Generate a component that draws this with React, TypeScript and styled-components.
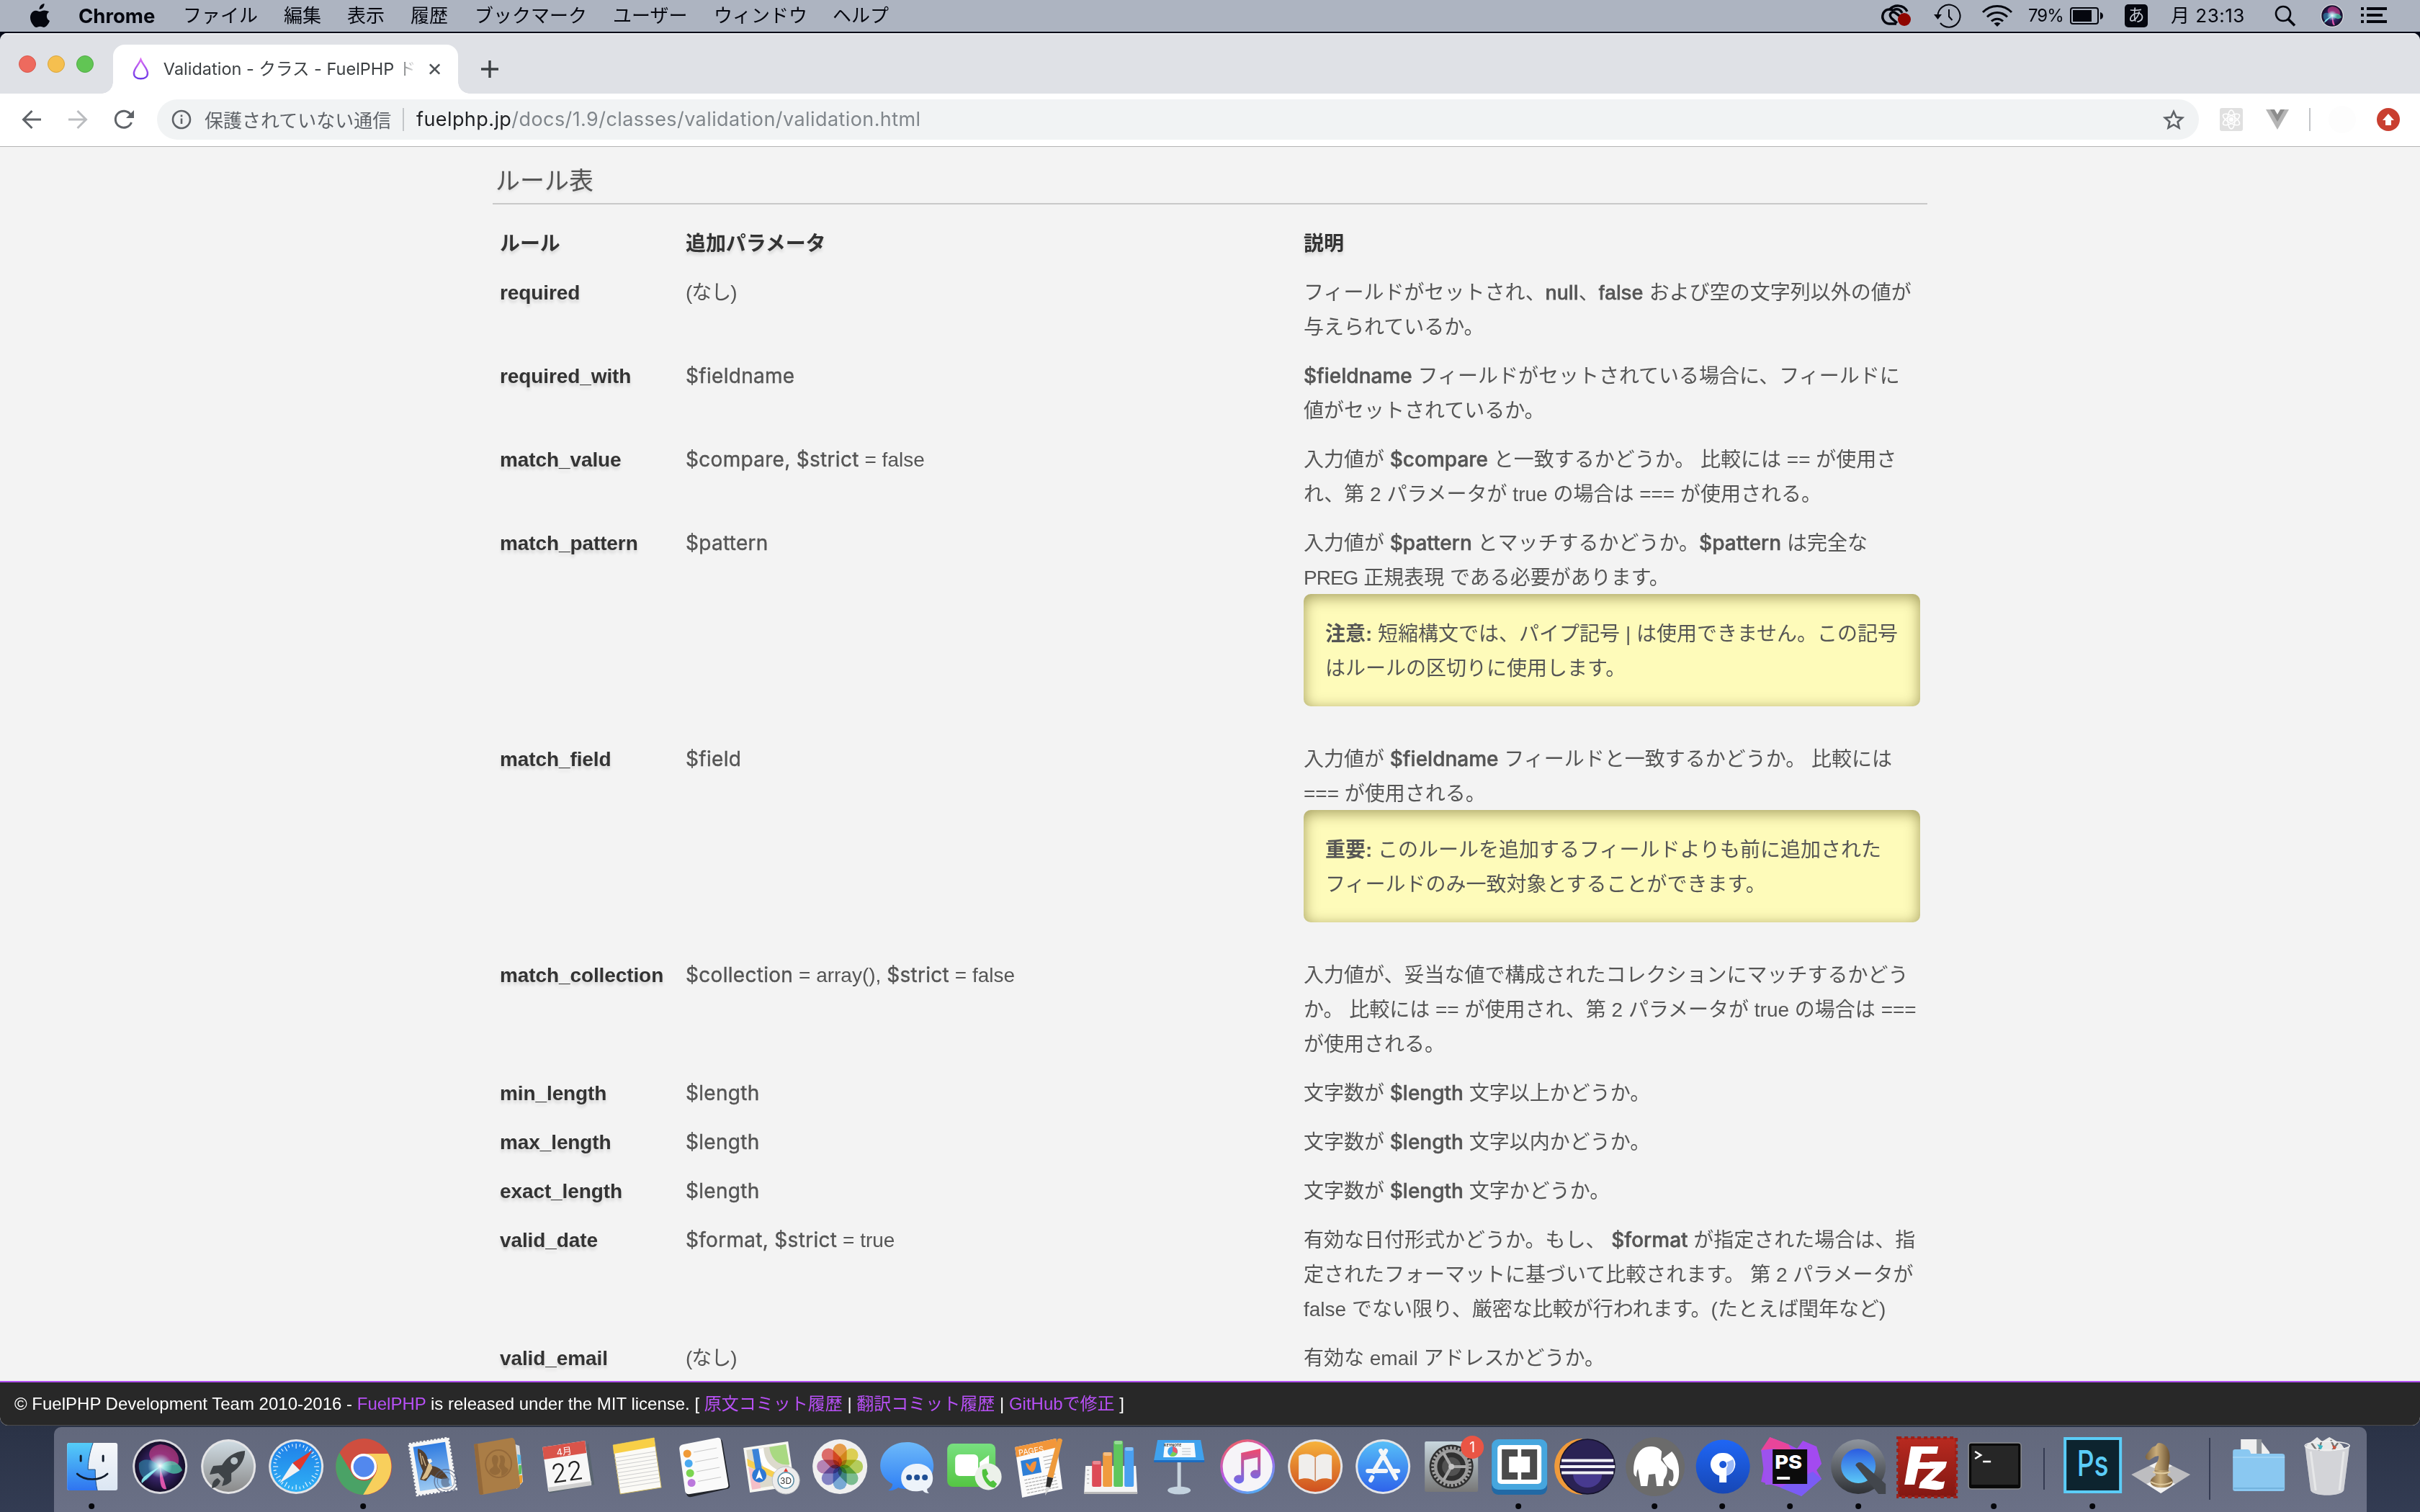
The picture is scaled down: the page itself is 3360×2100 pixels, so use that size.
import React from 'react';
import styled, { createGlobalStyle } from 'styled-components';

const ui = `Inter, "Noto Sans CJK JP", sans-serif`;
const bodyFont = `"Liberation Sans", "Noto Sans CJK JP", sans-serif`;

const GlobalStyle = createGlobalStyle`
  html, body { margin: 0; padding: 0; overflow: hidden; }
  *, *::before, *::after { box-sizing: border-box; }
  body { text-spacing-trim: space-all; }
`;

const Desktop = styled.div`
  width: 3360px;
  height: 2100px;
  display: flex;
  flex-direction: column;
  overflow: hidden;
  background: linear-gradient(180deg, #050a18 0, #050a18 60px, #232a3a 1900px, #2b3347 1990px, #333c53 2100px);
  font-family: ${ui};
`;

/* ---------- menu bar ---------- */
const MenuBar = styled.header`
  flex: none;
  height: 44px;
  margin-bottom: 2px;
  display: flex;
  align-items: center;
  background: #adb4c1;
  color: #05070f;
  font-size: 26px;
  line-height: 44px;
  white-space: nowrap;
`;
const AppleSlot = styled.span`
  display: flex;
  width: 109px;
  padding-left: 41px;
`;
const AppName = styled.span`
  width: 145px;
  font-weight: 700;
  font-size: 27.5px;
`;
const MenuItem = styled.span<{ $w: number }>`
  width: ${p => p.$w}px;
`;
const Status = styled.div`
  margin-left: auto;
  width: 748px;
  display: flex;
  align-items: center;
`;
const StatusSlot = styled.span<{ $w: number }>`
  width: ${p => p.$w}px;
  height: 44px;
  display: flex;
  align-items: center;
  svg { overflow: visible; }
`;
const StatusText = styled(StatusSlot)<{ $size: number; $track?: number }>`
  font-size: ${p => p.$size}px;
  letter-spacing: ${p => p.$track ?? 0}px;
`;
const InputMode = styled.span`
  width: 32px;
  height: 32px;
  border-radius: 5px;
  background: #05070f;
  color: #c3c8d2;
  font-size: 23px;
  line-height: 30px;
  text-align: center;
`;

/* ---------- browser window ---------- */
const Window = styled.main`
  flex: none;
  height: 1934px;
  margin-bottom: 2px;
  display: flex;
  flex-direction: column;
  border-radius: 10px 10px 12px 12px;
  overflow: hidden;
  background: #f3f3f3;
`;
const TabStrip = styled.div`
  flex: none;
  height: 84px;
  display: flex;
  background: #dfe1e6;
  border-top: 2px solid #eceef1;
`;
const Lights = styled.div`
  width: 157px;
  padding: 29px 0 0 26px;
  display: flex;
  gap: 16px;
`;
const Light = styled.i<{ $c: string; $b: string }>`
  width: 24px;
  height: 24px;
  border-radius: 50%;
  background: ${p => p.$c};
  border: 1px solid ${p => p.$b};
`;
const Tab = styled.div`
  position: relative;
  width: 479px;
  height: 68px;
  margin-top: 14px;
  padding: 0 24px 0 27px;
  display: flex;
  align-items: center;
  background: #fff;
  border-radius: 16px 16px 0 0;
  &::before, &::after {
    content: '';
    position: absolute;
    bottom: 0;
    width: 16px;
    height: 16px;
  }
  &::before { left: -16px; background: radial-gradient(circle at 0 0, transparent 15.5px, #fff 16px); }
  &::after { right: -16px; background: radial-gradient(circle at 100% 0, transparent 15.5px, #fff 16px); }
`;
const TabTitle = styled.span`
  width: 350px;
  margin: 0 18px 0 20px;
  white-space: nowrap;
  font-size: 23.5px;
  color: #3c4043;
  line-height: 40px;
  mask-image: linear-gradient(90deg, #000 322px, transparent 352px);
`;
const NewTab = styled.div`
  padding: 36px 0 0 32px;
`;
const Toolbar = styled.div`
  flex: none;
  height: 74px;
  display: flex;
  align-items: center;
  padding-bottom: 2px;
  background: #fff;
  border-bottom: 1px solid #b5b5b5;
`;
const NavButtons = styled.div`
  width: 218px;
  padding-left: 28px;
  display: flex;
  gap: 32px;
`;
const Omnibox = styled.div`
  width: 2835px;
  height: 56px;
  padding: 0 20px 0 20px;
  border-radius: 28px;
  background: #f1f3f4;
  display: flex;
  align-items: center;
  font-size: 26px;
  color: #5f6368;
  white-space: nowrap;
`;
const Security = styled.span`
  width: 261px;
  margin-left: 18px;
`;
const Rule = styled.i<{ $m: string }>`
  width: 2px;
  height: 32px;
  margin: ${p => p.$m};
  background: #c3c6c9;
`;
const Url = styled.span`
  flex: 1;
  color: #80868b;
  font-size: 27px;
  letter-spacing: 0.42px;
  b { font-weight: 400; color: #202124; }
`;
const Extensions = styled.div`
  flex: 1;
  display: flex;
  align-items: center;
  padding-left: 29px;
`;
const Ghost = styled.i`
  width: 38px;
  height: 38px;
  margin-right: 29px;
  border-radius: 50%;
  background: #fdfdfd;
`;

/* ---------- document ---------- */
const Page = styled.section`
  flex: 1;
  min-height: 0;
  overflow: hidden;
  padding-left: 684px;
  font-family: ${bodyFont};
  color: #555;
`;
const Heading = styled.h3`
  width: 1992px;
  height: 80px;
  margin: 0 0 19px;
  padding: 14px 0 0 4px;
  border-bottom: 2px solid #c9c9c9;
  font-weight: 400;
  font-size: 34px;
  line-height: 66px;
  text-shadow: 0 2px 4px rgba(0, 0, 0, 0.12);
`;
const Table = styled.div`
  width: 1992px;
  font-size: 28px;
  line-height: 51px;
`;
const Row = styled.div`
  display: grid;
  grid-template-columns: 258px 858px 876px;
`;
const Cell = styled.div`
  padding: 10px;
  white-space: nowrap;
`;
const HeadCell = styled(Cell)`
  padding-bottom: 7px;
  font-weight: 700;
  color: #333;
  letter-spacing: -0.1px;
  text-shadow: 0 4px 4px rgba(0, 0, 0, 0.12);
`;
const Line = styled.div`
  height: 48px;
`;
const Var = styled.span<{ $strong?: boolean }>`
  font-family: ${ui};
  font-weight: ${p => (p.$strong ? 500 : 400)};
  line-height: 0;
  letter-spacing: ${p => (p.$strong ? 0 : 0.3)}px;
  -webkit-text-stroke: ${p => (p.$strong ? 0.5 : 0.4)}px #555;
`;
const Med = styled.span`
  letter-spacing: 0.6px;
  -webkit-text-stroke: 0.9px #555;
`;
const Tight = styled.span`
  letter-spacing: -1px;
`;
const Note = styled.div`
  height: 156px;
  margin-bottom: 28px;
  padding: 30px;
  border-radius: 10px;
  background: #fefbba;
  box-shadow: inset 0 4px 20px rgba(70, 60, 0, 0.5);
`;
const PageFooter = styled.footer`
  flex: none;
  height: 62px;
  padding: 1px 0 0 20px;
  border-top: 2px solid #b14ff0;
  background: #282828;
  border-radius: 0 0 12px 12px;
  box-shadow: inset 0 -1px 0 #4a4a4a;
  color: #fff;
  font: 24px/58px ${bodyFont};
  white-space: nowrap;
`;
const Link = styled.a`
  color: #b750f5;
`;

/* ---------- dock ---------- */
const DockBar = styled.nav`
  width: 3211px;
  height: 118px;
  margin-left: 75px;
  padding: 0 7px 0 6px;
  display: flex;
  border-radius: 10px 10px 0 0;
  background: linear-gradient(180deg, #62687c, #6a7086);
`;
const DockItem = styled.div`
  flex: none;
  width: 94.33px;
  height: 118px;
  svg { display: block; width: 94.33px; height: 118px; overflow: visible; }
`;
const DockDivider = styled.div<{ $h: number }>`
  width: 42px;
  display: flex;
  justify-content: center;
  &::after {
    content: '';
    width: 2px;
    height: ${p => p.$h}px;
    margin-top: ${p => (118 - p.$h) / 2 - 1}px;
    background: #353b52;
  }
`;

const V = ({ children }: { children: string }) => <Var>{children}</Var>;
const S = ({ children }: { children: string }) => <Var $strong>{children}</Var>;

type RuleRow = { name: string; params: React.ReactNode; lines: React.ReactNode[]; note?: React.ReactNode[] };

const rules: RuleRow[] = [
  {
    name: 'required',
    params: <Tight>(なし)</Tight>,
    lines: [<>フィールドがセットされ、<Med>null</Med>、<Med>false</Med> および空の文字列以外の値が</>, '与えられているか。'],
  },
  {
    name: 'required_with',
    params: <V>$fieldname</V>,
    lines: [<><S>$fieldname</S> フィールドがセットされている場合に、フィールドに</>, '値がセットされているか。'],
  },
  {
    name: 'match_value',
    params: <><V>$compare, $strict</V> = false</>,
    lines: [<>入力値が <S>$compare</S> と一致するかどうか。 比較には == が使用さ</>, 'れ、第 2 パラメータが true の場合は === が使用される。'],
  },
  {
    name: 'match_pattern',
    params: <V>$pattern</V>,
    lines: [<>入力値が <S>$pattern</S> とマッチするかどうか。<S>$pattern</S> は完全な</>, <><Tight>PREG</Tight> 正規表現 である必要があります。</>],
    note: [<><b>注意:</b> 短縮構文では、パイプ記号 | は使用できません。この記号</>, 'はルールの区切りに使用します。'],
  },
  {
    name: 'match_field',
    params: <V>$field</V>,
    lines: [<>入力値が <S>$fieldname</S> フィールドと一致するかどうか。 比較には</>, '=== が使用される。'],
    note: [<><b>重要:</b> このルールを追加するフィールドよりも前に追加された</>, 'フィールドのみ一致対象とすることができます。'],
  },
  {
    name: 'match_collection',
    params: <><V>$collection</V> = array(), <V>$strict</V> = false</>,
    lines: [
      '入力値が、妥当な値で構成されたコレクションにマッチするかどう',
      'か。 比較には == が使用され、第 2 パラメータが true の場合は ===',
      'が使用される。',
    ],
  },
  { name: 'min_length', params: <V>$length</V>, lines: [<>文字数が <S>$length</S> 文字以上かどうか。</>] },
  { name: 'max_length', params: <V>$length</V>, lines: [<>文字数が <S>$length</S> 文字以内かどうか。</>] },
  { name: 'exact_length', params: <V>$length</V>, lines: [<>文字数が <S>$length</S> 文字かどうか。</>] },
  {
    name: 'valid_date',
    params: <><V>$format, $strict</V> = true</>,
    lines: [
      <>有効な日付形式かどうか。もし、 <S>$format</S> が指定された場合は、指</>,
      '定されたフォーマットに基づいて比較されます。 第 2 パラメータが',
      'false でない限り、厳密な比較が行われます。(たとえば閏年など)',
    ],
  },
  { name: 'valid_email', params: <Tight>(なし)</Tight>, lines: ['有効な email アドレスかどうか。'] },
];

const menus: [string, number][] = [
  ['ファイル', 140], ['編集', 88], ['表示', 88], ['履歴', 89], ['ブックマーク', 192], ['ユーザー', 140], ['ウィンドウ', 165], ['ヘルプ', 100],
];

/* ---------- dock artwork ---------- */
const Grad = ({ id, a, b }: { id: string; a: string; b: string }) => (
  <linearGradient id={id} x1="0" y1="0" x2="0" y2="1">
    <stop offset="0" stopColor={a} />
    <stop offset="1" stopColor={b} />
  </linearGradient>
);
const range = (n: number) => Array.from({ length: n }, (_, i) => i);
const Ring = ({ id, a, b }: { id: string; a: string; b: string }) => (
  <>
    <defs><Grad id={id} a={a} b={b} /></defs>
    <circle cx="47" cy="55" r="38" fill="#e4e4e6" />
    <circle cx="47" cy="55" r="35" fill={`url(#${id})`} />
  </>
);

const art: Record<string, React.ReactNode> = {
  finder: (
    <>
      <defs><Grad id="fi" a="#55cdf8" b="#2f74f0" /><Grad id="fj" a="#f7f8fa" b="#dbe6f3" /></defs>
      <rect x="12" y="22" width="70" height="66" rx="3" fill="url(#fj)" />
      <path d="M15 22H48C43 36 41 48 41 59H51C51 70 52 80 54 88H15a3 3 0 0 1-3-3V25a3 3 0 0 1 3-3Z" fill="url(#fi)" />
      <path d="M48 22C43 36 41 48 41 59H51C51 70 52 80 54 88" fill="none" stroke="#1d4f86" strokeWidth="1" />
      <path d="M31 40v7M62 40v7" stroke="#101c2c" strokeWidth="3" strokeLinecap="round" />
      <path d="M26 65C36 75 58 75 68 65" fill="none" stroke="#101c2c" strokeWidth="2.6" strokeLinecap="round" />
    </>
  ),
  siri: (
    <>
      <defs>
        <radialGradient id="si" cx=".5" cy=".5" r=".55"><stop offset="0" stopColor="#5a3b9e" /><stop offset=".6" stopColor="#2b1c52" /><stop offset="1" stopColor="#0d0a1c" /></radialGradient>
        <radialGradient id="sg"><stop offset="0" stopColor="#fff" /><stop offset=".4" stopColor="#bff" stopOpacity=".7" /><stop offset="1" stopColor="#bff" stopOpacity="0" /></radialGradient>
      </defs>
      <circle cx="47" cy="55" r="38" fill="#d9d9de" />
      <circle cx="47" cy="55" r="35" fill="url(#si)" />
      <path d="M47 55C24 45 30 26 48 24c20 2 28 16 24 28Z" fill="#d8418f" opacity=".6" />
      <path d="M47 55C38 44 24 42 18 50c-2 12 4 20 10 24Z" fill="#2f8fb0" opacity=".6" />
      <path d="M47 55C60 40 74 50 78 60c-8 8-18 6-31-5Z" fill="#4fd6ae" opacity=".7" />
      <path d="M47 55l9 31c-8 2-10-8-9-31Z" fill="#f05bb6" opacity=".9" />
      <path d="M47 55L22 78c-4-6 8-14 25-23Z" fill="#8ef1f5" opacity=".9" />
      <circle cx="47" cy="54" r="17" fill="url(#sg)" />
    </>
  ),
  launchpad: (
    <>
      <Ring id="lp" a="#cfdbe2" b="#8a8a8a" />
      <path d="M70 33C54 34 44 43 38 53l-12 1c-3 5-4 9-5 12l12-2 8 8-3 10c5-1 9-3 13-7l0-11C62 57 70 46 70 33Z" fill="#3e4347" />
      <circle cx="55" cy="47" r="5" fill="#b8c2c7" />
      <path d="M24 85c0-8 3-12 8-14l4 4c-2 5-6 9-12 10Z" fill="#3e4347" />
    </>
  ),
  safari: (
    <>
      <Ring id="sa" a="#1f7fe8" b="#2fb1f5" />
      {range(36).map(i => (
        <path key={i} d={i % 3 ? 'M47 23v4' : 'M47 23v7'} stroke="#e9f4fd" strokeWidth="1.2" transform={`rotate(${i * 10} 47 55)`} />
      ))}
      <path d="M70 32L52 60 42 50Z" fill="#e0382d" />
      <path d="M24 78L42 50 52 60Z" fill="#f2f2f2" />
    </>
  ),
  chrome: (
    <>
      <circle cx="47" cy="55" r="39" fill="#cf4e3f" />
      <path d="M13.2 35.5A39 39 0 0 0 47 94l17-29.4A19 19 0 0 1 30.5 64.5Z" fill="#4aa266" />
      <path d="M80.8 37H47a19 19 0 0 1 16.5 27.5L46 94A39 39 0 0 0 80.8 37Z" fill="#f8cf5c" />
      <circle cx="47" cy="55" r="18" fill="#fff" />
      <circle cx="47" cy="55" r="14.5" fill="#5288ee" />
    </>
  ),
  mail: (
    <>
      <defs><Grad id="ma" a="#2f7be0" b="#9cc9f1" /></defs>
      <g transform="rotate(-9 47 55)">
        <rect x="20" y="19" width="55" height="72" fill="#f5f5f5" stroke="#f5f5f5" strokeWidth="3" strokeDasharray="3 2" />
        <rect x="25" y="24" width="45" height="62" fill="url(#ma)" />
      </g>
      <path d="M27 30c8 2 13 8 14 17l2 7c8-1 19 4 26 17-6 2-12 1-17-1l-7-4-7 9-8-2 4-12c-5-10-8-21-7-31Z" fill="#54402f" />
      <path d="M33 40l5 14M30 36l3 16" stroke="#c9b08a" strokeWidth="1.5" />
      <path d="M42 50l4 2 1 5-7 13-5 3-3-1 5-9Z" fill="#d9bd8c" />
      <path d="M40 45l5-1 2 4-4 3Z" fill="#f5efe2" />
      <circle cx="66" cy="75" r="16" fill="none" stroke="#55607a" strokeWidth="1.5" opacity=".7" />
      <circle cx="66" cy="75" r="12" fill="none" stroke="#55607a" strokeWidth="1" opacity=".7" />
      <path d="M60 72c2-3 8-3 11 0-2 4-1 6 1 8-3 5-10 5-12 0-1-3-1-5 0-8Z" fill="#55607a" opacity=".6" />
    </>
  ),
  contacts: (
    <>
      <path d="M68 24l6 2 5 50-9 10Z" fill="#d8dadd" />
      <path d="M71 38l5 1v12l-4 1Z" fill="#58b7e8" /><path d="M73 53l4 0v12l-4 1Z" fill="#5cc25f" /><path d="M74 67l4 0v10l-5 3Z" fill="#f0a02f" />
      <path d="M11 24L63 15c3 0 4 2 5 5l7 60c0 3-1 4-4 5L22 94c-3 0-3-1-4-4Z" fill="#aa7d46" />
      <path d="M11 24l5-1 8 70-3 1c-2 0-3-1-3-4Z" fill="#94693a" />
      <ellipse cx="45" cy="51" rx="18" ry="19" fill="none" stroke="#94693a" strokeWidth="2" />
      <path d="M32 61c2-5 6-4 6-8-4-7-2-14 2-14 5 0 6 6 3 13 0 5 4 5 5 9-3 7-12 8-16 0Z" fill="#946a3a" />
      <path d="M46 40c6-3 10 3 7 12 0 4 4 4 6 7-2 5-6 8-10 9l0-8c-2-3-4-4-3-7 2-4 2-9 0-13Z" fill="#946a3a" />
    </>
  ),
  calendar: (
    <>
      <path d="M76 22l8 58-62 12-2-6Z" fill="#5a6570" />
      <path d="M12 28L71 19l9 61-60 9Z" fill="#f7f7f7" />
      <path d="M12 28L71 19l2 17-59 9Z" fill="#d9544a" />
      <path d="M20 84l60-9v6l-59 9Z" fill="#cfcfcf" />
      <g transform="rotate(-8 47 55)" fontFamily={ui} textAnchor="middle">
        <text x="45" y="38" fontSize="13" fill="#fff">4月</text>
        <text x="45" y="75" fontSize="36" fontWeight="300" fill="#222">22</text>
      </g>
    </>
  ),
  notes: (
    <>
      <path d="M15 25L72 15l10 69-57 9Z" fill="#fbfaf6" stroke="#c8b35c" strokeWidth="1" />
      <path d="M15 25L72 15l1 12-57 10Z" fill="#f8cf47" />
      {range(9).map(i => <path key={i} d={`M${17 + i * 0.8} ${43 + i * 5.2}l57 -9`} stroke="#cfcfcf" strokeWidth="1" />)}
    </>
  ),
  reminders: (
    <>
      <path d="M20 27L67 17q5-1 6 4l10 60q1 4-4 5L30 97q-6 1-7-4L14 33q0-5 6-6Z" fill="#22252c" />
      <path d="M19 24L65 15q5-1 6 4l10 61q1 4-4 5L28 93q-6 1-7-4L13 30q0-5 6-6Z" fill="#fafafa" />
      {['#f09a37', '#4aa9f0', '#7bd550', '#bb78dc'].map((c, i) => (
        <g key={c}>
          <circle cx={24 + i * 2} cy={37 + i * 13.5} r="5.5" fill={c} />
          <path d={`M${33 + i * 2} ${35 + i * 13.5}l32 -6`} stroke="#c9c9c9" strokeWidth="1" />
        </g>
      ))}
    </>
  ),
  maps: (
    <>
      <path d="M8 29L70 20l9 62-62 9Z" fill="#f7f7f2" />
      <path d="M12 32L67 24l8 54-55 8Z" fill="#dcdacc" />
      <path d="M44 28l23-4 5 28c-16 2-26-8-28-24Z" fill="#a9d982" />
      <path d="M36 29c1 22 16 34 38 34l1 8C46 72 30 58 28 30Z" fill="#fff" />
      <path d="M13 44l62 30v8L14 54Z" fill="#f7cf4f" />
      <path d="M15 56l14 6 3 23-12 2Z" fill="#f4bfc8" />
      <path d="M20 31l9-1 6 36-9 0Z" fill="#3a83d8" />
      <circle cx="30" cy="67" r="10" fill="#2e78d4" /><path d="M30 59l5 14-5-3-5 3Z" fill="#fff" />
      <circle cx="67" cy="74" r="19" fill="#ececec" stroke="#bfc2c4" />
      <circle cx="67" cy="74" r="11" fill="#fff" stroke="#5b8ea6" strokeWidth="1.5" />
      <path d="M67 57l3 5h-6Z" fill="#e0382d" />
      <text x="67" y="78.5" fontSize="12" fontFamily={ui} textAnchor="middle" fill="#333">3D</text>
    </>
  ),
  photos: (
    <>
      <circle cx="47" cy="55" r="38" fill="#f0f0f0" />
      {['#f39a38', '#e8d642', '#b5d44c', '#72c18a', '#6ea9de', '#7a7ac9', '#b77bb6', '#e8605b'].map((c, i) => (
        <Petal key={c} x="37.5" y="23" width="19" height="32" rx="9.5" fill={c} opacity=".88" transform={`rotate(${i * 45} 47 55)`} />
      ))}
    </>
  ),
  messages: (
    <>
      <defs><Grad id="ms" a="#6db9f9" b="#2f7ff5" /></defs>
      <path d="M46 21c21 0 37 14 37 33S67 86 46 86c-5 0-9-.5-12-2-4 3-9 5-14 4 5-3 6-6 6-9C16 74 9 65 9 54c0-19 16-33 37-33Z" fill="url(#ms)" />
      <path d="M60 51c13 0 22 8 22 20 0 7-3 12-8 15 0 3 1 5 3 6-4 0-7-1-9-4-20 5-30-5-30-17s9-20 22-20Z" fill="#edf3fa" />
      <circle cx="49" cy="70" r="4" fill="#1f4f94" /><circle cx="60" cy="70" r="4" fill="#1f4f94" /><circle cx="71" cy="70" r="4" fill="#1f4f94" />
    </>
  ),
  facetime: (
    <>
      <defs><Grad id="fa" a="#78e080" b="#55c643" /></defs>
      <rect x="8" y="23" width="67" height="60" rx="8" fill="url(#fa)" />
      <rect x="19" y="38" width="32" height="30" rx="6" fill="#fff" />
      <path d="M53 49l13-10v28L53 57Z" fill="#fff" />
      <circle cx="65" cy="69" r="18.5" fill="#ecf1ea" />
      <path d="M57 59l5-1 3 7-3 3c2 4 4 6 6 8l4-2 5 5-3 5c-9 1-20-14-17-25Z" fill="#4fc23d" />
    </>
  ),
  pages: (
    <>
      <path d="M7 28L64 16l9 70-56 12Z" fill="#fbfbfb" />
      <path d="M7 28L64 16l2 12L9 42Z" fill="#f2963a" />
      <g transform="rotate(-9 30 34)"><text x="12" y="37" fontSize="11" fill="#fff" fontFamily={ui}>PAGES</text></g>
      <path d="M15 47l25-5 4 21-26 5Z" fill="#2f7fd6" />
      <path d="M22 50c3 0 5 3 6 5 1-5 5-8 9-7-1 8-2 12-6 15-5-3-8-7-9-13Z" fill="#f5913a" />
      {range(5).map(i => <path key={i} d={`M${20 + i} ${74 + i * 4.5}l44 -9`} stroke="#a8a8a8" strokeWidth="1.2" strokeDasharray="4 1" />)}
      {range(4).map(i => <path key={i} d={`M${46 + i} ${42 + i * 5}l14 -3`} stroke="#a8a8a8" strokeWidth="1.2" />)}
      <path d="M66 17q4-3 7 1L60 71l-8-2Z" fill="#ee9a3c" /><path d="M52 69l8 2-4 13-6-1Z" fill="#2c2c2c" /><path d="M50 83l6 1-7 11Z" fill="#d5d5d5" />
    </>
  ),
  numbers: (
    <>
      <path d="M11 54h70l2 38H9Z" fill="#f5f5f5" />
      <path d="M9 90h74v3H9Z" fill="#bbb" />
      {([['#dd4b57', 20, 47], ['#f09b3f', 35, 35], ['#5fc65d', 50, 19], ['#4aa0f0', 65, 28]] as [string, number, number][]).map(([c, x, y]) => (
        <g key={c}><rect x={x} y={y} width="13" height={83 - y} rx="2" fill={c} /><rect x={x + 1} y={y} width="11" height="5" rx="2" fill="#fff" opacity=".35" /></g>
      ))}
      <path d="M13 60h3M13 66h3M13 72h3M13 78h3" stroke="#999" />
    </>
  ),
  keynote: (
    <>
      <ellipse cx="47" cy="88" rx="16" ry="5.5" fill="#c3d2df" />
      <path d="M44.500 48h5v39h-5Z" fill="#c8d4de" />
      <path d="M17 18h60l5 28H12Z" fill="#3fa2ee" /><path d="M12 46h70v3H12Z" fill="#1d6cc0" />
      <path d="M27 22h41l2 20H25Z" fill="#f7fafc" />
      <text x="38" y="27" fontSize="5" fontWeight="700" textAnchor="middle" fontFamily={ui} fill="#333">KEYNOTE</text>
      <circle cx="38" cy="34" r="7" fill="#3fa2ee" /><path d="M38 34v-7a7 7 0 0 1 6 10Z" fill="#e85b6b" /><path d="M38 34l6 3a7 7 0 0 1-10 3Z" fill="#7ccf52" />
      <path d="M51 30h12M51 34h12M51 38h12" stroke="#b5bcc4" />
    </>
  ),
  itunes: (
    <>
      <defs><linearGradient id="it" x1=".2" y1="0" x2=".7" y2="1"><stop offset="0" stopColor="#f5605a" /><stop offset=".5" stopColor="#b558e8" /><stop offset="1" stopColor="#4cb3f5" /></linearGradient><Grad id="iu" a="#f2496b" b="#6a6cf0" /></defs>
      <circle cx="47" cy="55" r="38" fill="url(#it)" /><circle cx="47" cy="55" r="34.5" fill="#f6f4f8" />
      <path d="M38 36l27-6v36a7 6 0 1 1-4-6V42l-19 4v26a7 6 0 1 1-4-5Z" fill="url(#iu)" />
    </>
  ),
  ibooks: (
    <>
      <Ring id="ib" a="#f6b23b" b="#cf5020" />
      <path d="M47 43c-5-6-15-7-23-3v33c8-3 18-2 23 3 5-5 15-6 23-3V40c-8-4-18-3-23 3Z" fill="#f0eeec" />
      <path d="M47 43v33" stroke="#c9855b" strokeWidth="1.5" />
    </>
  ),
  appstore: (
    <>
      <Ring id="as" a="#57bff8" b="#2e63ea" />
      <path d="M51 33L34 62M44 33L65 71M26 61h25M60 61h8M32 70l-2 4" stroke="#f4f6f8" strokeWidth="6" strokeLinecap="round" />
    </>
  ),
  prefs: (
    <>
      <defs><Grad id="sp" a="#c8d7de" b="#777" /></defs>
      <rect x="10" y="20" width="74" height="70" rx="2" fill="url(#sp)" />
      <circle cx="47" cy="55" r="30.5" fill="#303030" />
      <circle cx="47" cy="55" r="26" fill="none" stroke="#a3a3a3" strokeWidth="4" strokeDasharray="3 2.44" />
      <circle cx="47" cy="55" r="22" fill="none" stroke="#9b9b9b" strokeWidth="4.5" />
      <circle cx="47" cy="55" r="13" fill="#525252" />
      <path d="M47 55h21M47 55L36 36M47 55L36 74" stroke="#a8a8a8" strokeWidth="4" /><circle cx="47" cy="55" r="4" fill="#c4c4c4" />
      <circle cx="76" cy="28" r="16" fill="#ea5545" />
      <text x="76" y="35" fontSize="20" fontFamily={ui} textAnchor="middle" fill="#fff">1</text>
    </>
  ),
  brackets: (
    <>
      <rect x="9" y="22" width="77" height="72" rx="9" fill="#2269a5" />
      <rect x="9" y="17" width="77" height="70" rx="9" fill="#46a6de" />
      <rect x="17" y="25" width="61" height="54" rx="5" fill="#fff" />
      <path d="M23 31h22v10H33v22h12v10H23ZM72 31H50v10h12v22H50v10h22Z" fill="#4a4a4a" />
    </>
  ),
  eclipse: (
    <>
      <path d="M41 16A39 39 0 0 0 41 94C22 82 22 28 41 16Z" fill="#f09a3a" />
      <circle cx="48" cy="55" r="38" fill="#2a2254" stroke="#15132b" strokeWidth="1.5" />
      <path d="M28 66h40a20 18 0 0 1-40 0Z" fill="#473a8f" />
      <path d="M12 46.500h72M10 55h76M12 63.500h72" stroke="#f2f2f7" strokeWidth="4" />
    </>
  ),
  mamp: (
    <>
      <circle cx="47" cy="55" r="41" fill="#6b6b6b" />
      <path d="M17 62C16 42 26 26 42 27c8 0 12 4 14 7l-1 12 8 9c2 8-1 14-4 18l-1 9h-9l-2-17-9 1-2 16h-9l-4-24c-2 4-2 8-2 11-3-1-4-4-4-7Z" fill="#fff" />
      <path d="M57 44L70 34c6 6 10 16 10 28 0 12-4 20-9 20-4 0-6-4-5-8l4 2c3-4 3-10 1-16-5-2-9-6-14-16Z" fill="#fff" />
    </>
  ),
  sourcetree: (
    <>
      <defs><Grad id="st" a="#1f66f5" b="#1747b5" /></defs>
      <circle cx="47" cy="55" r="37.5" fill="url(#st)" />
      <path fillRule="evenodd" d="M47 36a16 16 0 0 1 5 31.500V77H42V67.500A16 16 0 0 1 47 36Zm0 11a5 5 0 1 0 .1 0Z" fill="#fff" />
      <path d="M52 67.500V57a6 6 0 0 0 0-8l9-4c4 10 0 19-9 22.500Z" fill="#9bb9f8" />
    </>
  ),
  phpstorm: (
    <>
      <path d="M18 14l26 10 12 6 8-11 19 8 7 24-7 9 7 12-28 24-28-12-28-8Z" fill="#a34af0" />
      <path d="M18 14l26 10 10 20H10L6 32Z" fill="#e8459a" />
      <path d="M6 32l6 48h14V30Z" fill="#9d52ee" />
      <path d="M32 84l30 12 28-24-12-10Z" fill="#7a5cf5" />
      <rect x="22" y="31" width="48" height="48" fill="#0c0c0c" />
      <text x="25" y="58" fontSize="26" fontWeight="800" textLength="38" lengthAdjust="spacingAndGlyphs" fontFamily={ui} fill="#fff">PS</text>
      <path d="M28 71h18" stroke="#fff" strokeWidth="4" />
    </>
  ),
  quicktime: (
    <>
      <defs><Grad id="qt" a="#8f959e" b="#2e3135" /><Grad id="qu" a="#2c5ce0" b="#5cc9f7" /></defs>
      <circle cx="46" cy="55" r="38" fill="url(#qt)" />
      <circle cx="46" cy="54" r="24" fill="url(#qu)" />
      <path d="M42 53a6 6 0 0 1 9-3l33 29v14H74Z" fill="#42464c" />
    </>
  ),
  filezilla: (
    <>
      <defs><Grad id="fz" a="#b82a20" b="#821712" /></defs>
      <rect x="7" y="15" width="81" height="82" fill="url(#fz)" />
      <rect x="7" y="15" width="81" height="82" fill="none" stroke="#9c2019" strokeWidth="4" strokeDasharray="5 4" />
      <path d="M25 27h38l-2 10H40l-3 12h21l-1 9H35l-5 22H16Z" fill="#fff" />
      <path d="M51 48h24l-2 8-20 19c6-3 13 4 19 0l-2 10c-9 5-20 0-34 0l2-8 20-20H49Z" fill="#fff" />
    </>
  ),
  terminal: (
    <>
      <rect x="11" y="22" width="73" height="64" rx="4" fill="#090909" stroke="#8a8c90" strokeWidth="1.5" />
      <rect x="15" y="26" width="65" height="54" fill="#262626" />
      <path d="M20 34l8 5-8 5" fill="none" stroke="#fff" strokeWidth="2.6" /><path d="M31 48h11" stroke="#fff" strokeWidth="2.6" />
    </>
  ),
  photoshop: (
    <>
      <rect x="6" y="14" width="81" height="78" fill="#5bcdf8" />
      <rect x="10" y="18" width="73" height="70" fill="#0d242f" />
      <text x="46.5" y="68" fontSize="49" fontWeight="500" textAnchor="middle" textLength="44" lengthAdjust="spacingAndGlyphs" fontFamily={ui} fill="#5bcdf8">Ps</text>
    </>
  ),
  chess: (
    <>
      <defs><linearGradient id="ch"><stop offset="0" stopColor="#7d6340" /><stop offset=".45" stopColor="#c9ad7b" /><stop offset="1" stopColor="#6d5433" /></linearGradient></defs>
      <path d="M47 46l41 20-41 26L6 66Z" fill="#bdbdc0" />
      <path d="M47 46l16 8-16 7-16-7ZM27 79l20-9 20 9-20 13Z" fill="#f2f2f2" />
      <path d="M42 23l2-1c12 1 17 12 15 26l-2 14H39c-3-8 6-14 5-22l-5 1-8 5c-5-1-7-4-4-8l8-10 5-2Z" fill="url(#ch)" />
      <path d="M38 60h20l-2 7c9 5 10 11 3 15-6 3-16 3-22 0-7-4-6-10 3-15Z" fill="url(#ch)" />
      <path d="M36 62c6 3 18 3 24 0M33 76c8 5 22 5 30 0" stroke="#e0cb9f" strokeWidth="2" fill="none" />
    </>
  ),
  folder: (
    <>
      <path d="M22 17h26l14 18v12H22Z" fill="#efefef" /><path d="M44 17h7v22h-7Z" fill="#8d9298" />
      <path d="M11 34q0-3 3-3h17q3 0 4 3l1 3h43q4 0 4 3v46q0 3-3 3H14q-3 0-3-3Z" fill="#8ac8f1" />
      <path d="M11 42h72" stroke="#b6e0fa" /><path d="M12 85h70" stroke="#5d9ecb" />
    </>
  ),
  trash: (
    <>
      <path d="M17 26l11-8 5-4 7 6 10-6 7 4 10 6 5 8-12 8H27Z" fill="#e8e8e8" />
      <path d="M25 22l7 10M39 20l-4 14M52 18l6 13M62 22l-8 10" stroke="#777" strokeWidth="2.5" /><path d="M33 24l8 2-3 6Z" fill="#3bb7c4" /><path d="M54 25l6 3-4 4Z" fill="#d0523c" />
      <path d="M16 26c18 10 44 10 62 0L70 88c-4 9-42 9-46 0Z" fill="#d3d4d8" />
      <path d="M24 34l7 54M70 34l-6 54" stroke="#f4f4f4" strokeWidth="3" opacity=".6" />
      <ellipse cx="47" cy="26" rx="31" ry="6" fill="none" stroke="#f1f1f1" strokeWidth="1.5" />
    </>
  ),
};

const running = new Set(['finder', 'chrome', 'brackets', 'mamp', 'sourcetree', 'phpstorm', 'quicktime', 'terminal', 'photoshop']);
const dockApps = [
  'finder', 'siri', 'launchpad', 'safari', 'chrome', 'mail', 'contacts', 'calendar', 'notes', 'reminders', 'maps', 'photos', 'messages',
  'facetime', 'pages', 'numbers', 'keynote', 'itunes', 'ibooks', 'appstore', 'prefs', 'brackets', 'eclipse', 'mamp', 'sourcetree',
  'phpstorm', 'quicktime', 'filezilla', 'terminal',
];

function Petal(props: React.SVGProps<SVGRectElement>) {
  return <BlendRect {...(props as object)} />;
}
const BlendRect = styled.rect`
  mix-blend-mode: multiply;
`;

const DockIcon = ({ id }: { id: string }) => (
  <DockItem>
    <svg viewBox="0 0 94 118">
      {art[id]}
      {running.has(id) && <circle cx="46" cy="110" r="4" fill="#05060a" />}
    </svg>
  </DockItem>
);

const VueIcon = styled.svg`
  margin-left: 32px;
`;

const Info = () => (
  <svg width="28" height="28" viewBox="0 0 28 28" fill="none" stroke="#5f6368" strokeWidth="2.6">
    <circle cx="14" cy="14" r="12" /><path d="M14 12.500v7.500M14 7.500v2.800" />
  </svg>
);

export default function App() {
  return (
    <Desktop>
      <GlobalStyle />
      <MenuBar>
        <AppleSlot>
          <svg width="28" height="34" viewBox="0 0 28 34" fill="#05070f">
            <path d="M20.500 0c.3 2.300-.7 4.300-2 5.800-1.300 1.400-3 2.300-4.900 2.200-.2-2.200.8-4.200 2-5.500C16.900 1.100 18.900.2 20.500 0ZM27.300 11.600c-2.300 1.400-3.500 3.400-3.400 5.900 0 3 1.700 5.300 4.100 6.400-.7 2-1.800 3.900-3.100 5.700-1.400 1.900-2.800 3.300-4.900 3.300-2 0-2.700-1.200-5.200-1.200s-3.300 1.200-5.200 1.300c-2 .1-3.500-1.700-4.800-3.600C1.500 25.700-.3 19.400 2 14.500c1.300-2.900 4-4.800 6.900-4.800 2.200 0 4 1.400 5.500 1.400 1.400 0 3.700-1.700 6.500-1.500 1.200.1 4.400.4 6.400 2Z" />
          </svg>
        </AppleSlot>
        <AppName>Chrome</AppName>
        {menus.map(([label, w]) => <MenuItem key={label} $w={w}>{label}</MenuItem>)}
        <Status>
          <StatusSlot $w={73}>
            <svg width="42" height="30" viewBox="0 0 42 30" fill="none" stroke="#05070f">
              <path d="M21 26H11A9.500 10 0 1 1 17 8" strokeWidth="3.5" />
              <path d="M12 6C18-1 31-1 36 9" strokeWidth="3.5" />
              <path d="M22 25l-8-7c-5-6 2-11 7-6l8 6M17 7c6-3 10 0 12 4" strokeWidth="3.5" />
              <circle cx="32" cy="20" r="9" fill="#8f0500" stroke="none" />
            </svg>
          </StatusSlot>
          <StatusSlot $w={67}>
            <svg width="38" height="34" viewBox="0 0 38 34" fill="none" stroke="#05070f" strokeWidth="2">
              <path d="M5.500 17A15.500 15.500 0 1 1 9 27M21 8v10l4.500 5" /><path d="M0 15h11l-5.500 7Z" fill="#05070f" stroke="none" />
            </svg>
          </StatusSlot>
          <StatusSlot $w={64}>
            <svg width="42" height="30" viewBox="0 0 42 30" fill="none" stroke="#05070f" strokeWidth="3">
              <path d="M1 10C12-1.500 30-1.500 41 10M7 16.500c8-8 20-8 28 0M13 22.500c4.500-4.500 11.500-4.500 16 0" /><path d="M21 30l-4.500-4.500q4.500-3 9 0Z" fill="#05070f" stroke="none" />
            </svg>
          </StatusSlot>
          <StatusText $w={58} $size={24} $track={-1}>79%</StatusText>
          <StatusSlot $w={76}>
            <svg width="46" height="24" viewBox="0 0 46 24">
              <rect x="1" y="1" width="38" height="22" rx="3" fill="none" stroke="#05070f" strokeWidth="2" /><rect x="4" y="4" width="26" height="16" fill="#05070f" /><path d="M42 7q4 1 4 5t-4 5Z" fill="#05070f" />
            </svg>
          </StatusSlot>
          <StatusSlot $w={64}><InputMode>あ</InputMode></StatusSlot>
          <StatusText $w={144} $size={26} $track={0.5}>月 23:13</StatusText>
          <StatusSlot $w={64}>
            <svg width="30" height="30" viewBox="0 0 30 30" fill="none" stroke="#05070f" strokeWidth="2.6"><circle cx="12" cy="12" r="10" /><path d="M19 19.500l9 9" strokeWidth="3.5" /></svg>
          </StatusSlot>
          <StatusSlot $w={56}>
            <svg width="32" height="32" viewBox="9 17 76 76">{art.siri}</svg>
          </StatusSlot>
          <StatusSlot $w={36}>
            <svg width="36" height="24" viewBox="0 0 36 24" fill="#05070f"><path d="M0 0h4v4H0ZM8 0h28v4H8ZM0 9h4v4H0ZM8 9h22v4H8ZM0 18h4v4H0ZM8 18h28v4H8Z" /></svg>
          </StatusSlot>
        </Status>
      </MenuBar>

      <Window>
        <TabStrip>
          <Lights>
            <Light $c="#ee6a5e" $b="#d8574c" />
            <Light $c="#f5bf4f" $b="#d9a53b" />
            <Light $c="#61c554" $b="#50ac44" />
          </Lights>
          <Tab>
            <svg width="24" height="32" viewBox="0 0 24 32" fill="none">
              <defs><Grad id="drop" a="#d96bf5" b="#6d3be6" /></defs>
              <path d="M12 2C9 10 2 15 2 22c0 5 4 8 10 8s10-3 10-8c0-7-7-12-10-20Z" stroke="url(#drop)" strokeWidth="2.6" />
            </svg>
            <TabTitle>Validation - クラス - FuelPHP ド</TabTitle>
            <svg width="18" height="18" viewBox="0 0 18 18" stroke="#4f5357" strokeWidth="2.8"><path d="M2 2l14 14M16 2L2 16" /></svg>
          </Tab>
          <NewTab>
            <svg width="24" height="24" viewBox="0 0 24 24" stroke="#3c4043" strokeWidth="3.4"><path d="M12 0v24M0 12h24" /></svg>
          </NewTab>
        </TabStrip>
        <Toolbar>
          <NavButtons>
            <svg width="32" height="28" viewBox="0 0 32 28" fill="none" stroke="#5f6368" strokeWidth="3"><path d="M29 14H5M16.500 2L4.500 14l12 12" /></svg>
            <svg width="32" height="28" viewBox="0 0 32 28" fill="none" stroke="#bbbdc0" strokeWidth="3"><path d="M3 14h24M15.500 2l12 12-12 12" /></svg>
            <svg width="32" height="28" viewBox="0 0 32 28" fill="none" stroke="#5f6368" strokeWidth="3"><path d="M26.500 18A11.500 11.500 0 1 1 25.500 7.500" /><path d="M30 1v11H19Z" fill="#5f6368" stroke="none" /></svg>
          </NavButtons>
          <Omnibox>
            <Info />
            <Security>保護されていない通信</Security>
            <Rule $m="0 17px 0 14px" />
            <Url><b>fuelphp.jp</b>/docs/1.9/classes/validation/validation.html</Url>
            <svg width="30" height="28" viewBox="0 0 30 28" fill="none" stroke="#5f6368" strokeWidth="2.6"><path d="M15 3l3.500 7.800 8.500.8-6.400 5.700 1.900 8.300L15 21.200l-7.500 4.400 1.900-8.300L3 11.600l8.500-.8Z" /></svg>
          </Omnibox>
          <Extensions>
            <svg width="32" height="32" viewBox="0 0 32 32" fill="none" stroke="#fff" strokeWidth="1.6">
              <rect width="32" height="32" rx="3" fill="#e0e0e0" stroke="none" />
              {[30, 90, 150].map(a => <ellipse key={a} cx="16" cy="16" rx="13" ry="5" transform={`rotate(${a} 16 16)`} />)}
              <circle cx="16" cy="16" r="2.5" fill="#fff" />
            </svg>
            <VueIcon width="32" height="28" viewBox="0 0 32 28"><path d="M0 0h32L16 28Z" fill="#b5b5b5" /><path d="M6 0h20L16 17Z" fill="#8d8d8d" /><path d="M12 0h8l-4 7Z" fill="#fff" /></VueIcon>
            <Rule $m="0 25px 0 28px" />
            <Ghost />
            <svg width="32" height="32" viewBox="0 0 32 32"><circle cx="16" cy="16" r="16" fill="#c93f30" /><path d="M16 8l8 9h-4v7h-8v-7H8Z" fill="#fff" /></svg>
          </Extensions>
        </Toolbar>

        <Page>
          <Heading>ルール表</Heading>
          <Table>
            <Row>
              <HeadCell>ルール</HeadCell>
              <HeadCell>追加パラメータ</HeadCell>
              <HeadCell>説明</HeadCell>
            </Row>
            {rules.map(r => (
              <Row key={r.name}>
                <HeadCell>{r.name}</HeadCell>
                <Cell><Line>{r.params}</Line></Cell>
                <Cell>
                  {r.lines.map((l, i) => <Line key={i}>{l}</Line>)}
                  {r.note && <Note>{r.note.map((l, i) => <Line key={i}>{l}</Line>)}</Note>}
                </Cell>
              </Row>
            ))}
          </Table>
        </Page>
        <PageFooter>
          © FuelPHP Development Team 2010-2016 - <Link>FuelPHP</Link> is released under the MIT license. [ <Link>原文コミット履歴</Link> | <Link>翻訳コミット履歴</Link> | <Link>GitHubで修正</Link> ]
        </PageFooter>
      </Window>

      <DockBar>
        {dockApps.map(id => <DockIcon key={id} id={id} />)}
        <DockDivider $h={58} />
        <DockIcon id="photoshop" />
        <DockIcon id="chess" />
        <DockDivider $h={86} />
        <DockIcon id="folder" />
        <DockIcon id="trash" />
      </DockBar>
    </Desktop>
  );
}
